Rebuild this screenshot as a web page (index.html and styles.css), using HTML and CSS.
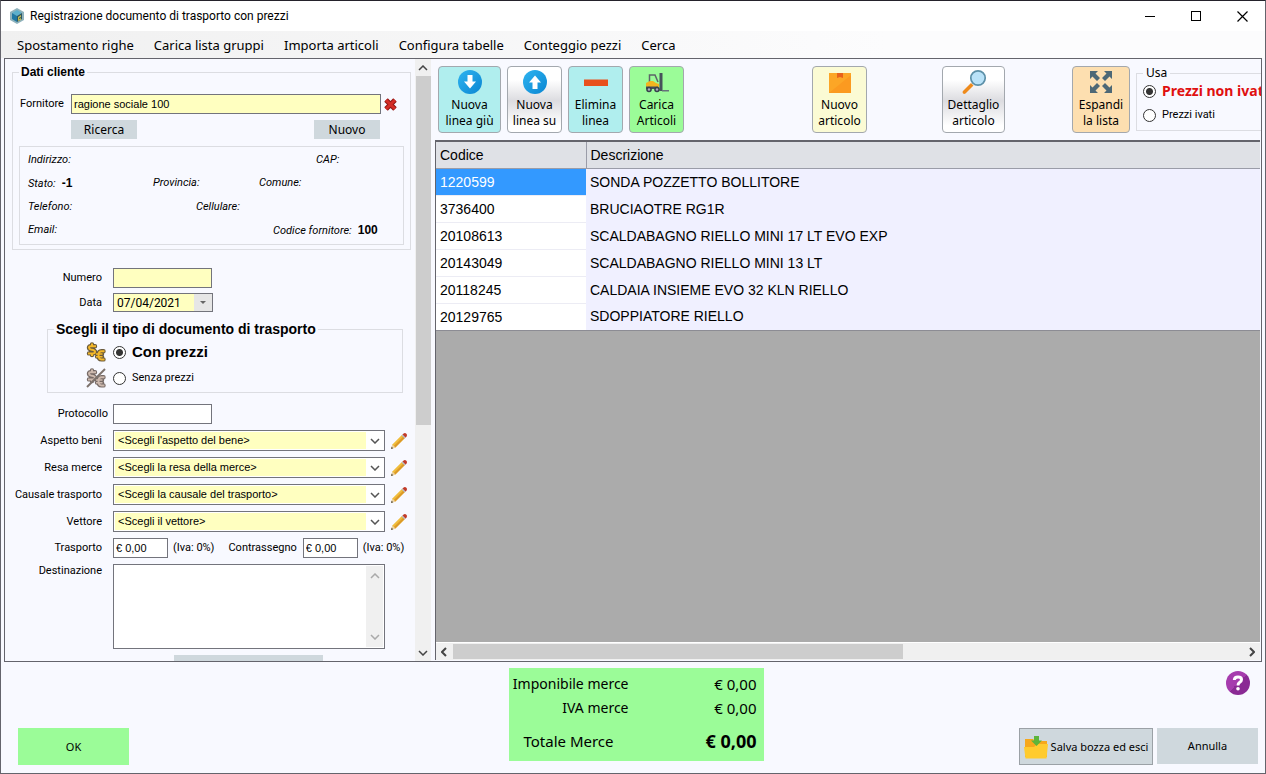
FILE: index.html
```html
<!DOCTYPE html>
<html lang="it">
<head>
<meta charset="utf-8">
<title>Registrazione documento di trasporto con prezzi</title>
<link rel="stylesheet" href="styles.css">
</head>
<body>
<svg width="0" height="0" class="defs" aria-hidden="true">
  <defs>
    <linearGradient id="blue" x1="0" y1="0" x2="1" y2="1"><stop offset="0" stop-color="#2fb4f0"/><stop offset="1" stop-color="#0a86d2"/></linearGradient>
    <linearGradient id="purple" x1="0" y1="0" x2="1" y2="1"><stop offset=".5" stop-color="#a63cae"/><stop offset=".5" stop-color="#8a2a94"/></linearGradient>
    <symbol id="pencil" viewBox="0 0 18 18">
      <path d="M1 17 2.4 12.6 12.4 2.6 15.4 5.6 5.4 15.600Z" fill="#f0bd3c"/>
      <path d="M3.900 14.100 13.900 4.100 15.400 5.600 5.400 15.600Z" fill="#dc9a28"/>
      <path d="M1 17 2.400 12.600 5.400 15.600Z" fill="#ecd2a4"/>
      <path d="M1 17 1.700 14.800 3.200 16.300Z" fill="#444"/>
      <path d="M11.600 3.400 13 2 16 5 14.600 6.400Z" fill="#b9bcc4"/>
      <path d="M12.600 2.400 13.600 1.400Q15 .4 16.400 1.700 17.600 3 16.600 4.400L15.600 5.400Z" fill="#c23a28"/>
    </symbol>
    <symbol id="down" viewBox="0 0 10 6"><path d="M1 1 5 5 9 1" fill="none" stroke="currentColor" stroke-width="1.500"/></symbol>
    <symbol id="up" viewBox="0 0 10 6"><path d="M1 5 5 1 9 5" fill="none" stroke="currentColor" stroke-width="1.500"/></symbol>
    <symbol id="left" viewBox="0 0 6 10"><path d="M5 1 1 5 5 9" fill="none" stroke="currentColor" stroke-width="2"/></symbol>
    <symbol id="right" viewBox="0 0 6 10"><path d="M1 1 5 5 1 9" fill="none" stroke="currentColor" stroke-width="2"/></symbol>
    <symbol id="coins" viewBox="0 0 20 20">
      <g fill="none">
        <g stroke="var(--edge)" stroke-width="4.400" stroke-linejoin="round" stroke-linecap="round">
          <path d="M9 4.200H4.500Q3 4.200 3 5.600 3 7.200 5 7.600 9 8.200 9 9.800 9 11.400 7 11.400H3M6 2.500V13"/>
          <path d="M17.500 9.200H15.500Q12.500 9.200 12.500 13.300 12.500 17.400 15.500 17.400H17.500M11 12H16M11 14.600H16"/>
        </g>
        <g stroke="var(--face)" stroke-width="2">
          <path d="M10 4.200H4.500Q3 4.200 3 5.600 3 7.200 5 7.600 9 8.200 9 9.800 9 11.400 7 11.400H2M6 1.500V4M6 11.500V14"/>
          <path d="M18.500 9.200H15.500Q12.500 9.200 12.500 13.300 12.500 17.400 15.500 17.400H18.500"/>
          <path d="M10 12H16.500M10 14.800H16.500" stroke-width="1.500"/>
        </g>
      </g>
    </symbol>
  </defs>
</svg>
<div class="window">
  <header class="titlebar">
    <svg class="app-icon" viewBox="0 0 14 16"><path d="M7 0 14 4V12L7 16 0 12V4Z" fill="#8fb2bc"/><path d="M7 2 12 5 7 8 2 5Z" fill="#5cb0cc"/><path d="M2 5 7 8V14L2 11Z" fill="#1f78a2"/><path d="M12 5 7 8V14L12 11Z" fill="#2c5660"/><path d="M8 9 11 7V9L9 10V11L11 10V12L8 13Z" fill="#c0b850"/></svg>
    <h1 class="title">Registrazione documento di trasporto con prezzi</h1>
    <button class="win-btn" aria-label="Riduci"><svg viewBox="0 0 11 11"><path d="M0 5.500H10" stroke="#000"/></svg></button>
    <button class="win-btn" aria-label="Ingrandisci"><svg viewBox="0 0 11 11"><rect x=".5" y=".5" width="9" height="9" fill="none" stroke="#000"/></svg></button>
    <button class="win-btn" aria-label="Chiudi"><svg viewBox="0 0 11 11"><path d="M.5.5 10.500 10.500M10.500.5.5 10.500" stroke="#000" stroke-width="1.200"/></svg></button>
  </header>
  <nav class="menu">
    <button>Spostamento righe</button><button>Carica lista gruppi</button><button>Importa articoli</button><button>Configura tabelle</button><button>Conteggio pezzi</button><button>Cerca</button>
  </nav>
  <main class="main">
    <section class="side">
      <form class="form">
        <fieldset class="group customer">
          <legend>Dati cliente</legend>
          <div class="supplier">
            <label for="fornitore">Fornitore</label>
            <input id="fornitore" class="field yellow" value="ragione sociale 100">
            <button type="button" class="icon-btn" aria-label="Rimuovi fornitore"><svg width="13" height="13" viewBox="0 0 13 13"><path d="M2 2 11 11M11 2 2 11" stroke="#8d1512" stroke-width="5"/><path d="M2 2 11 11M11 2 2 11" stroke="#d42c26" stroke-width="3"/></svg></button>
          </div>
          <div class="supplier-actions"><button type="button" class="flat small">Ricerca</button><button type="button" class="flat small">Nuovo</button></div>
          <div class="details">
            <div class="line"><i>Indirizzo:</i><i class="c-cap">CAP:</i></div>
            <div class="line"><span><i>Stato:</i><b>-1</b></span><i class="c-prov">Provincia:</i><i class="c-com">Comune:</i></div>
            <div class="line"><i>Telefono:</i><i class="c-cell">Cellulare:</i></div>
            <div class="line"><i>Email:</i><span class="c-code"><i>Codice fornitore:</i><b>100</b></span></div>
          </div>
        </fieldset>
        <div class="row first"><label for="numero">Numero</label><input id="numero" class="field short yellow"></div>
        <div class="row"><label for="data">Data</label><span class="date"><input id="data" value="07/04/2021"><button type="button" aria-label="Apri calendario"><svg width="6" height="3" viewBox="0 0 6 3"><path d="M0 0H6L3 3Z" fill="#666"/></svg></button></span></div>
        <fieldset class="group kind">
          <legend>Scegli il tipo di documento di trasporto</legend>
          <div class="choice"><svg class="coin gold" width="20" height="20"><use href="#coins"/></svg><input type="radio" name="kind" id="con" checked><label for="con" class="strong">Con prezzi</label></div>
          <div class="choice"><svg class="coin dull" width="20" height="20"><use href="#coins"/><path d="M1 19 19 1" stroke="#7d726c" stroke-width="2"/></svg><input type="radio" name="kind" id="senza"><label for="senza">Senza prezzi</label></div>
        </fieldset>
        <div class="row close"><label for="prot">Protocollo</label><input id="prot" class="field short"></div>
        <div class="row tall"><label for="aspetto">Aspetto beni</label><span class="combo"><select id="aspetto"><option>&lt;Scegli l'aspetto del bene&gt;</option></select><svg width="10" height="6"><use href="#down"/></svg></span><button type="button" class="icon-btn" aria-label="Modifica aspetto beni"><svg width="18" height="18"><use href="#pencil"/></svg></button></div>
        <div class="row tall"><label for="resa">Resa merce</label><span class="combo"><select id="resa"><option>&lt;Scegli la resa della merce&gt;</option></select><svg width="10" height="6"><use href="#down"/></svg></span><button type="button" class="icon-btn" aria-label="Modifica resa merce"><svg width="18" height="18"><use href="#pencil"/></svg></button></div>
        <div class="row tall"><label for="causale">Causale trasporto</label><span class="combo"><select id="causale"><option>&lt;Scegli la causale del trasporto&gt;</option></select><svg width="10" height="6"><use href="#down"/></svg></span><button type="button" class="icon-btn" aria-label="Modifica causale"><svg width="18" height="18"><use href="#pencil"/></svg></button></div>
        <div class="row tall"><label for="vettore">Vettore</label><span class="combo"><select id="vettore"><option>&lt;Scegli il vettore&gt;</option></select><svg width="10" height="6"><use href="#down"/></svg></span><button type="button" class="icon-btn" aria-label="Modifica vettore"><svg width="18" height="18"><use href="#pencil"/></svg></button></div>
        <div class="row costs"><label for="trasp">Trasporto</label><input id="trasp" class="field money" value="€ 0,00"><span class="vat">(Iva: 0%)</span><label for="contr" class="inline">Contrassegno</label><input id="contr" class="field money" value="€ 0,00"><span class="vat">(Iva: 0%)</span></div>
        <div class="row dest"><label for="dest">Destinazione</label><span class="area"><textarea id="dest"></textarea><span class="bar"><svg width="10" height="6"><use href="#up"/></svg><svg width="10" height="6"><use href="#down"/></svg></span></span></div>
        <button type="button" class="flat more" aria-label="Altre opzioni"></button>
      </form>
      <div class="scroll-y"><svg width="10" height="6"><use href="#up"/></svg><div class="thumb"></div><svg width="10" height="6"><use href="#down"/></svg></div>
    </section>
    <section class="content">
      <div class="toolbar">
        <div class="tools">
          <button class="tool wide aqua"><svg width="26" height="26" viewBox="0 0 26 26"><circle cx="13" cy="13" r="12" fill="url(#blue)"/><path d="M10.500 6H15.500V12.500H19L13 19.500 7 12.500H10.500Z" fill="#fff"/></svg>Nuova<br>linea giù</button>
          <button class="tool silver"><svg width="26" height="26" viewBox="0 0 26 26"><circle cx="13" cy="13" r="12" fill="url(#blue)"/><path d="M10.500 20H15.500V13.500H19L13 6.500 7 13.500H10.500Z" fill="#fff"/></svg>Nuova<br>linea su</button>
          <button class="tool aqua"><svg width="26" height="26" viewBox="0 0 26 26"><path d="M1 10.500H25V17H1Z" fill="#e8501c"/></svg>Elimina<br>linea</button>
          <button class="tool lime"><svg width="26" height="26" viewBox="0 0 26 26"><path d="M5.500 13V6H11L14 13" fill="none" stroke="#5d6468" stroke-width="1.500"/><path d="M2 14 6 12 9 12 12 14 15 15V20H2Z" fill="#f3b51e"/><path d="M15.500 4H18.500V22H15.500Z" fill="#46525a"/><path d="M18 21H25V22.500H18Z" fill="#66737a"/><path d="M2 17.500H14V20H2Z" fill="#44505a"/><circle cx="5" cy="20.500" r="2.800" fill="#37424c"/><circle cx="5" cy="20.500" r="1.200" fill="#aab"/><circle cx="13" cy="20.500" r="2.800" fill="#37424c"/><circle cx="13" cy="20.500" r="1.200" fill="#aab"/></svg>Carica<br>Articoli</button>
        </div>
        <span class="gap-a"></span>
        <button class="tool cream"><svg width="26" height="26" viewBox="0 0 26 26"><path d="M2 4H24V24H2Z" fill="#fca626"/><path d="M2 24 24 6V24Z" fill="#fb9a20"/><path d="M10 4H16V9L13 8 10 9Z" fill="#e8621a"/></svg>Nuovo<br>articolo</button>
        <span class="gap-b"></span>
        <button class="tool wide silver"><svg width="26" height="26" viewBox="0 0 26 26"><path d="M10 14 12.500 16.500 4.500 24.500Q3 25.500 2 24.300 1 23 2 22Z" fill="#ee8a1c"/><circle cx="17" cy="9" r="7.200" fill="#b9e2f8" stroke="#5c90a8" stroke-width="1.700"/></svg>Dettaglio<br>articolo</button>
        <span class="gap-c"></span>
        <button class="tool peach"><svg width="26" height="26" viewBox="0 0 26 26"><path d="M2 2H10L7.500 4.500 12 9 9 12 4.500 7.500 2 10ZM24 2V10L21.500 7.500 17 12 14 9 18.500 4.500 16 2ZM2 24V16L4.500 18.500 9 14 12 17 7.500 21.500 10 24ZM24 24H16L18.500 21.500 14 17 17 14 21.500 18.500 24 16Z" fill="#4d6876"/></svg>Espandi<br>la lista</button>
        <fieldset class="group use">
          <legend>Usa</legend>
          <div class="choice"><input type="radio" name="iva" id="noniva" checked><label for="noniva" class="red">Prezzi non ivati</label></div>
          <div class="choice"><input type="radio" name="iva" id="iva"><label for="iva">Prezzi ivati</label></div>
        </fieldset>
      </div>
      <div class="grid">
        <table>
          <thead><tr><th>Codice</th><th>Descrizione</th></tr></thead>
          <tbody>
            <tr class="selected"><td>1220599</td><td>SONDA POZZETTO BOLLITORE</td></tr>
            <tr><td>3736400</td><td>BRUCIAOTRE RG1R</td></tr>
            <tr><td>20108613</td><td>SCALDABAGNO RIELLO MINI 17 LT EVO EXP</td></tr>
            <tr><td>20143049</td><td>SCALDABAGNO RIELLO MINI 13 LT</td></tr>
            <tr><td>20118245</td><td>CALDAIA INSIEME EVO 32 KLN RIELLO</td></tr>
            <tr><td>20129765</td><td>SDOPPIATORE RIELLO</td></tr>
          </tbody>
        </table>
        <div class="scroll-x"><svg width="6" height="10"><use href="#left"/></svg><div class="track"><div class="thumb"></div></div><svg width="6" height="10"><use href="#right"/></svg></div>
      </div>
    </section>
  </main>
  <footer class="footer">
    <div class="foot-left"><button class="flat ok">OK</button></div>
    <dl class="totals">
      <dt>Imponibile merce</dt><dd>€ 0,00</dd>
      <dt>IVA merce</dt><dd>€ 0,00</dd>
      <dt class="grand">Totale Merce</dt><dd class="grand">€ 0,00</dd>
    </dl>
    <div class="foot-right">
      <button class="icon-btn help" aria-label="Aiuto"><svg width="24" height="24" viewBox="0 0 24 24"><circle cx="12" cy="12" r="12" fill="url(#purple)"/><path d="M8.300 9Q8.500 6 12 6 15.500 6 15.500 8.700 15.500 10.300 13.500 11.500 12 12.500 12 14.500" fill="none" stroke="#fff" stroke-width="3"/><circle cx="12" cy="17.800" r="1.800" fill="#fff"/></svg></button>
      <div class="foot-btns">
        <button class="flat save"><svg width="24" height="24" viewBox="0 0 24 24"><path d="M1 4H9L11 6H23V22H1Z" fill="#f6a81c"/><path d="M0 12H10L13 9H24L22.500 23.500H1.500Z" fill="#ffcb2e"/><path d="M10 1H15V5.500H18L12.500 11 7 5.500H10Z" fill="#5db53a"/></svg>Salva bozza ed esci</button>
        <button class="flat cancel">Annulla</button>
      </div>
    </div>
  </footer>
</div>
</body>
</html>
```
FILE: styles.css
```css
* { box-sizing: border-box; }

:root {
  --line: #64646c;
  --soft: #dcdde2;
  --bg: #f8f9ff;
  --yellow: #ffffc0;
  --flat: #cfd8dd;
  --lime: #9bfc98;
}

body {
  margin: 0;
  font: 11px/14px "Noto Sans", "Open Sans", sans-serif;
  color: #000;
  background: var(--bg);
}

button, input, select, textarea { font: inherit; color: inherit; margin: 0; }
button { border: 0; padding: 0; background: none; }
svg { display: block; flex: none; }
.defs { position: absolute; }

.window {
  display: flex;
  flex-direction: column;
  height: 100vh;
  border: 1px solid var(--line);
  border-top-color: #24222b;
}

/* Title bar and menu */
.titlebar { display: flex; align-items: center; height: 30px; background: #fff; padding-left: 9px; }
.app-icon { width: 14px; height: 16px; }
.title { flex: 1; margin: 0 0 0 6px; font: 400 12px/16px Roboto, "Open Sans", sans-serif; }
.win-btn { display: flex; align-items: center; justify-content: center; width: 46px; height: 28px; }
.win-btn svg { width: 11px; height: 11px; }
.menu {
  display: flex;
  gap: 20px;
  height: 27px;
  padding: 0 16px;
  font-size: 13px;
  background: linear-gradient(90deg, #f0f0f0, #fcfcfd 70%);
}

.main { display: flex; flex: 1; min-height: 0; margin: 0 3px; border: 1px solid var(--line); }

/* Left pane */
.side { display: flex; width: 430px; flex: none; overflow: hidden; }
.form { flex: 1; padding: 6px 4px 0 7px; overflow: hidden; font-family: Roboto, "Open Sans", sans-serif; }
.group { margin: 0; border: 1px solid var(--soft); min-width: 0; }
.group legend { padding: 0 2px; }
.customer { padding: 0 6px 4px; }
.customer legend, .kind legend { font-family: "Liberation Sans", Arial, sans-serif; font-weight: 700; }
.customer legend { font-size: 12px; }
.supplier { display: flex; align-items: center; margin-top: 15px; }
.supplier label { width: 52px; padding-left: 1px; }
.field {
  height: 20px;
  padding: 0 2px;
  border: 1px solid #73747c;
  background: #fff;
  font-family: "Liberation Sans", Arial, sans-serif;
}
.supplier .field { width: 310px; }
.yellow { background: var(--yellow); }
.supplier .icon-btn { margin-left: 3px; }
.supplier-actions { display: flex; justify-content: space-between; margin: 6px 24px 7px 52px; }
.flat { display: flex; align-items: center; justify-content: center; background: var(--flat); }
.small { width: 66px; height: 19px; font: 12px/16px "Noto Sans", sans-serif; }
.details { display: flex; flex-direction: column; gap: 9px; height: 99px; padding: 6px 8px; border: 1px solid var(--soft); }
.line { display: grid; grid-template-columns: 125px 43px 63px 14px 43px 1fr; white-space: nowrap; }
.line > * { grid-row: 1; }
.line b { margin-left: 6px; font: 700 12px/14px "Liberation Sans", Arial, sans-serif; }
.c-prov { grid-column: 2 / -1; }
.c-cell { grid-column: 3 / -1; }
.c-com { grid-column: 4 / -1; }
.c-code { grid-column: 5 / -1; }
.c-cap { grid-column: 6; }

.row { display: flex; align-items: center; margin-bottom: 5px; white-space: nowrap; }
.row > label { flex: none; width: 101px; padding-right: 11px; text-align: right; }
.row.first { margin-top: 18px; }
.row.close { margin: 11px 0 6px; }
.row.close > label { padding-right: 5px; }
.short { width: 99px; }
.date { display: flex; width: 100px; height: 19px; border: 1px solid #73747c; }
.date input { flex: 1; min-width: 0; padding: 0 3px; border: 0; background: var(--yellow); font-size: 12px; }
.date button { display: flex; width: 18px; align-items: center; justify-content: center; background: #e6e6e6; }
.kind { margin: 9px 8px 0 35px; padding: 2px 0 1px 38px; }
.kind legend { margin-left: -32px; font-size: 14px; line-height: 16px; }
.choice { display: flex; align-items: center; }
.kind .choice { height: 26px; }
.coin { margin-right: 7px; }
.gold { --edge: #6a5a3c; --face: #f4b829; }
.dull { --edge: #766a66; --face: #cdb9ae; }
input[type="radio"] {
  appearance: none;
  flex: none;
  width: 13px;
  height: 13px;
  margin-right: 6px;
  border: 1px solid #333;
  border-radius: 50%;
  background: #fff;
}
input[type="radio"]:checked { background: radial-gradient(circle, #333 3px, #fff 4px); }
.strong { font: 700 15px/18px "Liberation Sans", Arial, sans-serif; }
.combo { display: grid; align-items: center; width: 272px; height: 21px; padding: 1px; border: 1px solid #73747c; background: #fff; }
.combo select, .combo svg { grid-area: 1 / 1; }
.combo svg { justify-self: end; margin-right: 3px; color: #555; pointer-events: none; }
.combo select {
  appearance: none;
  height: 17px;
  padding: 0 20px 2px 3px;
  border: 0;
  background: linear-gradient(90deg, var(--yellow) calc(100% - 17px), #fff 0);
  font: 11px/14px "Liberation Sans", Arial, sans-serif;
}
.row.tall { height: 21px; margin-bottom: 6px; }
.row .icon-btn { margin-left: 5px; }
.money { flex: none; width: 55px; }
.vat { margin-left: 5px; }
.row .inline { width: auto; margin-left: 14px; padding-right: 6px; }
.costs { margin-bottom: 6px; }
.dest { align-items: flex-start; }
.area { display: flex; width: 272px; height: 85px; padding: 1px; border: 1px solid #73747c; background: #fff; }
.area textarea { flex: 1; min-width: 0; border: 0; padding: 2px; resize: none; background: none; }
.bar { display: flex; flex-direction: column; justify-content: space-between; align-items: center; width: 17px; padding: 7px 0; color: #aaa; background: #f0f0f0; }
.more { width: 149px; height: 20px; margin: 6px 0 0 162px; }

.scroll-y { display: flex; flex-direction: column; align-items: center; width: 16px; margin-right: 4px; padding: 6px 0 5px; color: #444; background: #f0f0f0; }
.scroll-y .thumb { flex: none; width: 15px; height: 349px; margin: 5px 0 auto; background: #cdcdcd; }

/* Right pane */
.content { display: flex; flex: 1; min-width: 0; flex-direction: column; }
.toolbar { display: flex; height: 81px; padding: 7px 0 7px 3px; overflow: hidden; }
.tools { display: flex; gap: 6px; }
.tool {
  display: flex;
  flex-direction: column;
  align-items: center;
  flex: none;
  width: 55px;
  height: 67px;
  padding-top: 2px;
  border: 1px solid #a3a8ae;
  border-radius: 4px;
  font-size: 12px;
  line-height: 16px;
}
.tool svg { margin-bottom: 2px; }
.wide { width: 63px; }
.aqua { background: #b0eeee; }
.lime { background: var(--lime); }
.cream { background: #fbfbd4; }
.peach { width: 58px; background: #fddfb0; }
.silver { background: linear-gradient(#fff 20%, #dcdce0 52%, #fff 90%); }
.gap-a { flex: 128; }
.gap-b { flex: 75; }
.gap-c { flex: 67; }
.use { flex: none; width: 131px; height: 66px; margin: -1px -6px 0 6px; padding: 0 0 0 6px; font-family: Roboto, "Open Sans", sans-serif; }
.use legend { padding: 0 3px; font: 12px/16px "Noto Sans", sans-serif; }
.use .choice { height: 20px; margin-bottom: 4px; white-space: nowrap; }
.red { color: #e01010; font: 700 14px/18px "Noto Sans", sans-serif; }

.grid {
  display: flex;
  flex: 1;
  flex-direction: column;
  justify-content: space-between;
  margin: 0 1px 1px 0;
  border: 1px solid var(--line);
  border-width: 2px 0 0 1px;
  background: #ababab;
}
table { width: 100%; border-collapse: collapse; table-layout: fixed; font: 14px/18px "Liberation Sans", Arial, sans-serif; }
th { height: 26px; padding: 0 4px; text-align: left; font-weight: 400; background: #dfe1e6; border-bottom: 1px solid #9a9ca8; }
th:first-child { width: 150px; border-right: 1px solid #9a9ca8; }
td { height: 27px; padding: 0 4px; background: #f0f0ff; }
td:first-child { background: #fff; border-bottom: 1px solid #ececf4; }
.selected td:first-child { color: #fff; background: #3399ff; }
tbody tr:last-child td { border-bottom: 1px solid #8c8c94; }
.scroll-x { display: flex; align-items: center; height: 18px; padding: 0 5px; background: #f0f0f0; border-top: 1px solid #fff; color: #444; }
.track { flex: 1; margin: 0 6px; }
.scroll-x .thumb { width: 57%; height: 15px; background: #cdcdcd; }

/* Footer */
.footer { display: grid; grid-template-columns: 491fr 255px 495fr; height: 111px; padding: 6px 7px 8px 17px; }
.foot-left { display: flex; align-items: flex-end; }
.ok { width: 111px; height: 37px; background: var(--lime); }
.footer .flat { font-size: 11px; }
.totals { display: grid; grid-template-columns: 120px 1fr; align-content: start; height: 93px; margin: 0; padding: 4px 7px 0 0; background: var(--lime); font-size: 14px; line-height: 24px; }
.totals dt, .totals dd { margin: 0; text-align: right; }
.totals dd { font-size: 15px; }
.totals .grand { padding-top: 8px; font-size: 15px; line-height: 26px; }
.totals dt.grand { padding-right: 15px; }
.totals dd.grand { font-weight: 700; font-size: 18px; }
.foot-right { display: flex; flex-direction: column; align-items: flex-end; justify-content: space-between; }
.help { margin: 3px 8px 0 0; }
.foot-btns { display: flex; gap: 4px; }
.save { gap: 3px; width: 134px; height: 37px; border: 1px solid #9ba1a6; }
.cancel { width: 101px; height: 36px; }
```
